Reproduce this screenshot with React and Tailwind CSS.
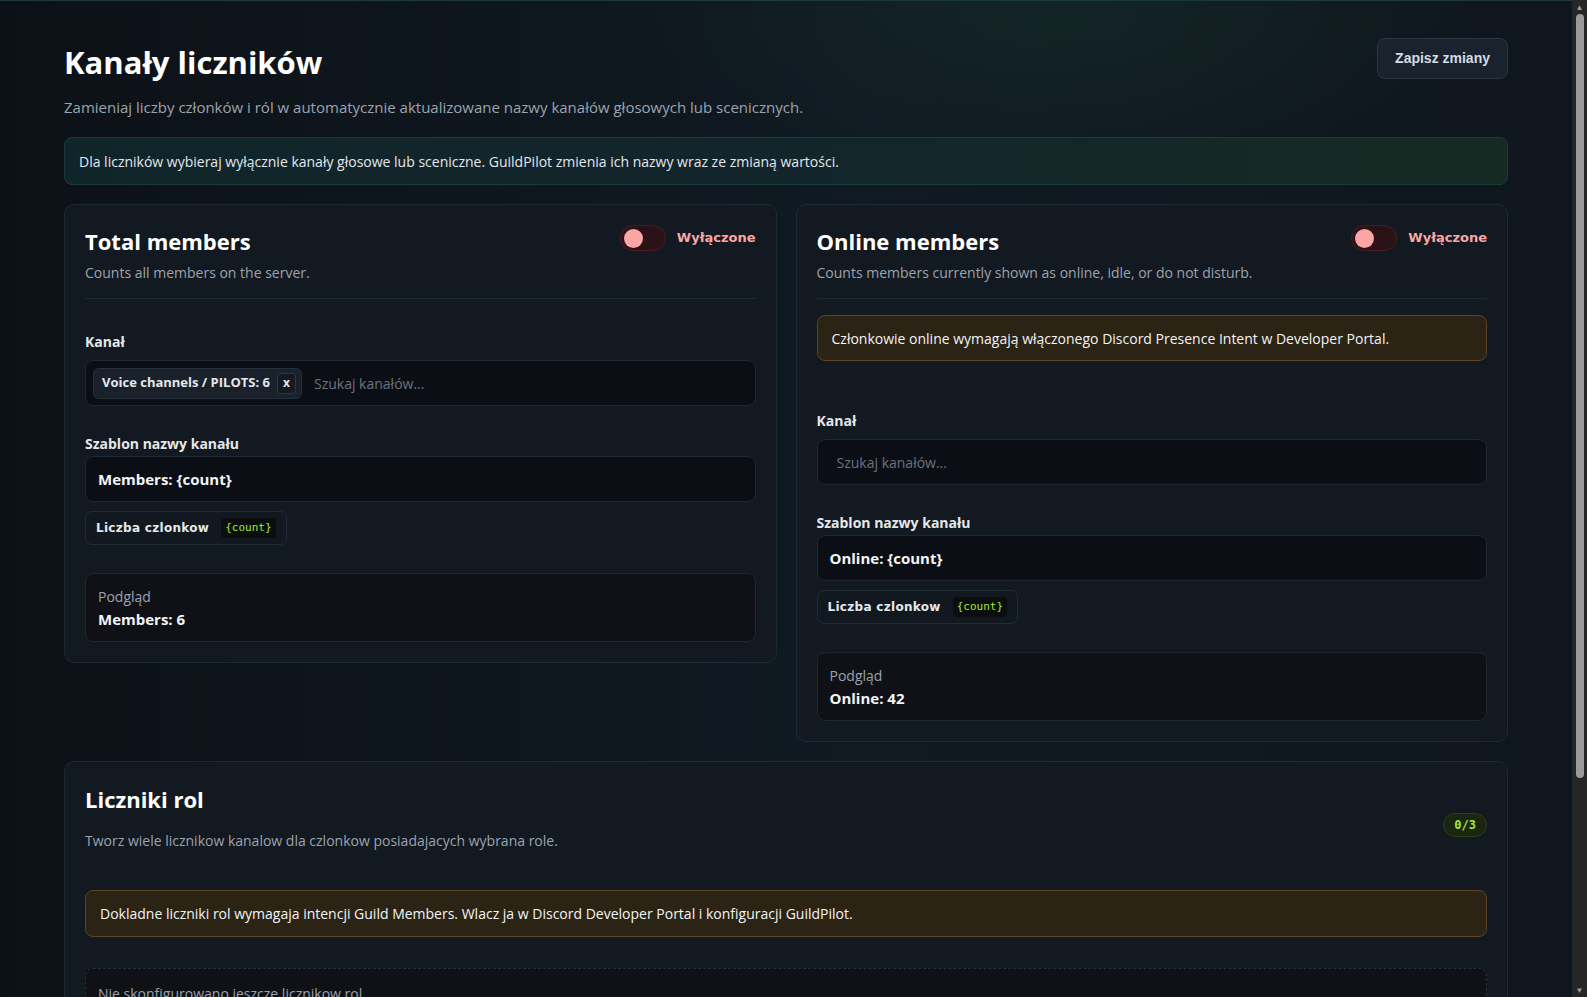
import React from "react";

const body = { fontFamily: '"Open Sans", "Noto Sans", sans-serif' };

function Toggle() {
  return (
    <div className="flex items-center gap-[11px] shrink-0">
      <div className="w-[46px] h-[26px] rounded-full bg-[#2a1216] border border-[#4a1c22] flex items-center px-[3px]">
        <div className="w-[19px] h-[19px] rounded-full bg-[#fca5a5]" />
      </div>
      <span className="font-bold text-[13px] text-[#fca5a5]" style={{ fontFamily: '"DejaVu Sans", sans-serif' }}>
        Wyłączone
      </span>
    </div>
  );
}

function CountChip() {
  return (
    <div className="inline-flex items-center gap-[12px] h-[34px] px-[10px] rounded-[7px] border border-[#222c36] bg-[#111820] self-start">
      <span className="text-[12px] font-bold text-[#e5e7eb] tracking-[0.3px]" style={{ fontFamily: '"DejaVu Sans", sans-serif' }}>
        Liczba czlonkow
      </span>
      <span className="text-[11px] px-[4px] py-[2px] rounded bg-[#0a0e0f] text-[#a3e635]" style={{ fontFamily: '"DejaVu Sans Mono", monospace' }}>
        {"{count}"}
      </span>
    </div>
  );
}

function Preview({ text }) {
  return (
    <div className="mt-[28px] rounded-[8px] border border-[#1f2730] bg-[#0f1117] px-[12px] pt-[12px] pb-[11px]">
      <div className="text-[14px] leading-[22px] text-[#9ca3af]">Podgląd</div>
      <div className="text-[15px] leading-[22px] font-bold text-[#f3f4f6]">{text}</div>
    </div>
  );
}

function CardHeader({ title, sub }) {
  return (
    <div className="border-b border-[#1f2a33] pb-[15px]">
      <div className="flex items-start justify-between">
        <h2 className="text-[22px] leading-[28px] font-bold text-white mt-[2px]">{title}</h2>
        <Toggle />
      </div>
      <p className="text-[14px] leading-[20px] text-[#9ca3af] mt-[8px]">{sub}</p>
    </div>
  );
}

function Label({ children, className = "" }) {
  return <div className={"text-[14px] leading-[20px] font-bold text-[#e5e7eb] " + className}>{children}</div>;
}

function TemplateInput({ value }) {
  return (
    <div className="h-[46px] rounded-[8px] border border-[#1f2730] bg-[#0b0f15] flex items-center px-[12px] text-[15px] font-bold text-[#f3f4f6]">
      {value}
    </div>
  );
}

function Scrollbar() {
  return (
    <div className="w-[15px] shrink-0 bg-[#262626] flex flex-col items-center">
      <div className="h-[14px] w-full flex items-center justify-center text-[8px] leading-none text-[#9b9b9b]">▲</div>
      <div className="w-[8px] h-[764px] rounded-full bg-[#9b9b9b]" />
      <div className="flex-1" />
      <div className="h-[14px] w-full flex items-center justify-center text-[8px] leading-none text-[#9b9b9b]">▼</div>
    </div>
  );
}

export default function App() {
  return (
    <div className="h-screen flex overflow-hidden bg-[#0d1218]" style={body}>
      <div className="flex-1 min-w-0 overflow-hidden">
        <div className="min-h-[1280px] bg-[radial-gradient(ellipse_600px_260px_at_68%_0%,rgba(45,140,90,0.10),transparent_70%),linear-gradient(90deg,#0c1117_0%,#101a22_55%,#0f161d_100%)] border-t border-[#1b3a3a] px-16 pt-[37px] pb-[230px]">
          <div className="flex items-start justify-between">
            <div>
              <h1 className="text-[31px] leading-[40px] font-bold text-white mt-[4px]">Kanały liczników</h1>
              <p className="text-[15px] leading-[22px] text-[#9ca3af] mt-[14px]">
                Zamieniaj liczby członków i ról w automatycznie aktualizowane nazwy kanałów głosowych lub scenicznych.
              </p>
            </div>
            <button
              className="h-[41px] px-[17px] rounded-[8px] border border-[#2a3642] bg-[#1a232d] text-[14px] font-bold text-[#d6dbe3]"
              style={{ fontFamily: '"Liberation Sans", Arial, sans-serif' }}
            >
              Zapisz zmiany
            </button>
          </div>

          <div className="mt-[19px] h-[48px] rounded-[8px] border border-[#1d3b3c] bg-[linear-gradient(90deg,#10252a,#13262a_60%,#172a22)] flex items-center px-[14px] text-[14px] text-[#e5e7eb]">
            Dla liczników wybieraj wyłącznie kanały głosowe lub sceniczne. GuildPilot zmienia ich nazwy wraz ze zmianą wartości.
          </div>

          <div className="mt-[19px] grid grid-cols-2 gap-[19px] items-start">
            {/* Left card */}
            <div className="rounded-[10px] border border-[#1b2a33] bg-[#121920] p-5">
              <CardHeader title="Total members" sub="Counts all members on the server." />
              <Label className="mt-[33px]">Kanał</Label>
              <div className="mt-[8px] h-[46px] rounded-[8px] border border-[#1f2730] bg-[#0b0f15] flex items-center px-[7px] gap-[12px]">
                <div className="h-[31px] flex items-center gap-[7px] pl-[8px] pr-[5px] rounded-[6px] border border-[#26303a] bg-[#1a212a]">
                  <span className="text-[13px] font-bold text-[#e5e7eb]">Voice channels / PILOTS: 6</span>
                  <span className="w-[19px] h-[21px] rounded-[3px] border border-[#2d3640] bg-[#141a21] flex items-center justify-center text-[12px] font-bold text-[#e5e7eb]">
                    x
                  </span>
                </div>
                <span className="text-[14px] text-[#6b7280]">Szukaj kanałów...</span>
              </div>
              <Label className="mt-[28px]">Szablon nazwy kanału</Label>
              <div className="mt-[2px] flex flex-col gap-[9px]">
                <TemplateInput value="Members: {count}" />
                <CountChip />
              </div>
              <Preview text="Members: 6" />
            </div>

            {/* Right card */}
            <div className="rounded-[10px] border border-[#1b2a33] bg-[#121920] p-5">
              <CardHeader title="Online members" sub="Counts members currently shown as online, idle, or do not disturb." />
              <div className="mt-[16px] h-[46px] rounded-[8px] border border-[#5a4520] bg-[#2b2314] flex items-center px-[14px] text-[14px] text-[#f3f4f6]">
                Członkowie online wymagają włączonego Discord Presence Intent w Developer Portal.
              </div>
              <Label className="mt-[50px]">Kanał</Label>
              <div className="mt-[8px] h-[46px] rounded-[8px] border border-[#1f2730] bg-[#0b0f15] flex items-center px-[19px]">
                <span className="text-[14px] text-[#6b7280]">Szukaj kanałów...</span>
              </div>
              <Label className="mt-[28px]">Szablon nazwy kanału</Label>
              <div className="mt-[2px] flex flex-col gap-[9px]">
                <TemplateInput value="Online: {count}" />
                <CountChip />
              </div>
              <Preview text="Online: 42" />
            </div>
          </div>

          <div className="mt-[19px] rounded-[10px] border border-[#1b2a33] bg-[#121920] p-5">
            <div className="flex items-start justify-between">
              <div>
                <h2 className="text-[22px] leading-[28px] font-bold text-white mt-[3px]">Liczniki rol</h2>
                <p className="text-[14px] leading-[20px] text-[#9ca3af] mt-[18px]">
                  Tworz wiele licznikow kanalow dla czlonkow posiadajacych wybrana role.
                </p>
              </div>
              <span
                className="mt-[31px] h-[24px] px-[10px] rounded-full border border-[#2d3d17] bg-[#1a2512] flex items-center text-[12px] font-bold text-[#a3e635]"
                style={{ fontFamily: '"DejaVu Sans Mono", monospace' }}
              >
                0/3
              </span>
            </div>
            <div className="mt-[39px] h-[47px] rounded-[8px] border border-[#5a4520] bg-[#2b2314] flex items-center px-[14px] text-[14px] text-[#f3f4f6]">
              Dokladne liczniki rol wymagaja intencji Guild Members. Wlacz ja w Discord Developer Portal i konfiguracji GuildPilot.
            </div>
            <div className="mt-[31px] rounded-[8px] border border-dashed border-[#26303a] bg-[#0f1117] px-[12px] py-[14px] text-[14px] text-[#9ca3af]">
              Nie skonfigurowano jeszcze licznikow rol.
            </div>
          </div>
        </div>
      </div>
      <Scrollbar />
    </div>
  );
}
